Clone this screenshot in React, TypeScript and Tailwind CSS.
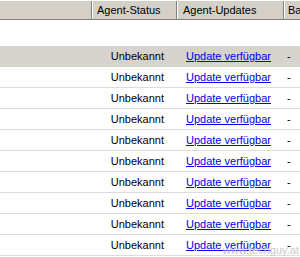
const rows = Array.from({ length: 10 }, (_, i) => i);

export default function App() {
  return (
    <div
      className="relative w-[300px] h-[257px] overflow-hidden bg-white text-[11px] text-black"
      style={{ fontFamily: '"Liberation Sans", Arial, sans-serif' }}
    >
      {/* Header */}
      <div className="flex h-[20px] bg-[#d4d0c8] border-t border-white border-b border-b-[#808080]">
        <div className="w-[92px] shrink-0 border-r border-[#808080]" />
        <div className="w-[85px] shrink-0 border-l border-white border-r border-r-[#808080] pl-[4px] flex items-center">
          Agent-Status
        </div>
        <div className="w-[107px] shrink-0 border-l border-white border-r border-r-[#808080] pl-[5px] flex items-center">
          Agent-Updates
        </div>
        <div className="flex-1 border-l border-white pl-[3px] flex items-center whitespace-nowrap">
          Ba
        </div>
      </div>

      {/* Empty space */}
      <div className="h-[26px]" />

      {/* Rows */}
      {rows.map((i) => (
        <div
          key={i}
          className={
            i === 0
              ? 'flex h-[21px] items-center bg-[#d6d3ce] border-b border-[#d6d3ce]'
              : 'flex h-[21px] items-center border-b border-[#dcdcdc]'
          }
        >
          <div className="w-[92px] shrink-0" />
          <div className="w-[85px] shrink-0 text-right pr-[13px]">Unbekannt</div>
          <div className="w-[107px] shrink-0 pl-[9px] whitespace-nowrap">
            <span className="text-[#0000ee] underline">Update verfügbar</span>
          </div>
          <div className="flex-1 pl-[3px]">-</div>
        </div>
      ))}

      {/* Watermark */}
      <div className="absolute right-[1px] bottom-[-1px] text-[11px] text-[#c8c8c8]">www.techguy.at</div>
    </div>
  );
}
